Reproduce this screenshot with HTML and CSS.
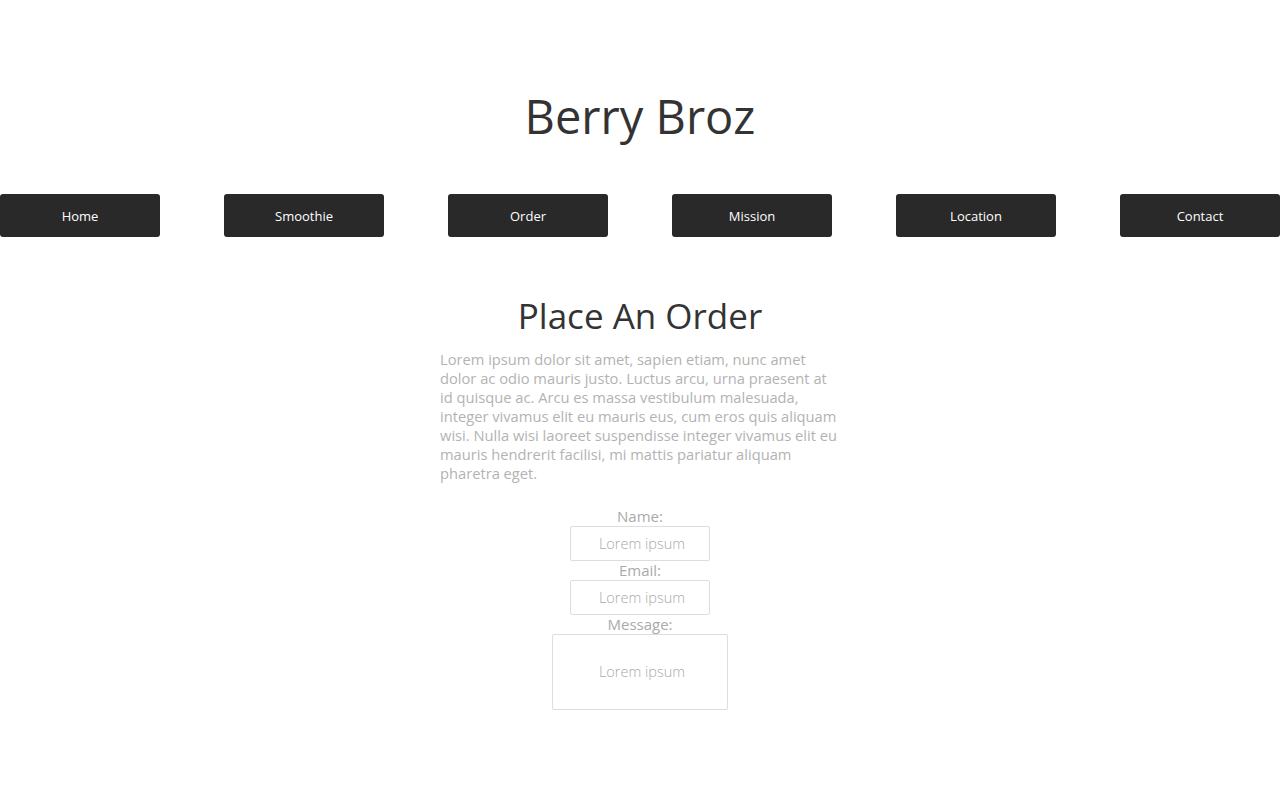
FILE: index.html
```html
<!DOCTYPE html>
<html lang="en">
<head>
<meta charset="utf-8">
<title>Berry Broz</title>
<link rel="stylesheet" href="styles.css">
</head>
<body>
<header class="site-header">
  <h1 class="brand">Berry Broz</h1>
</header>
<nav class="main-nav">
  <a class="nav-btn" href="#">Home</a>
  <a class="nav-btn" href="#">Smoothie</a>
  <a class="nav-btn" href="#">Order</a>
  <a class="nav-btn" href="#">Mission</a>
  <a class="nav-btn" href="#">Location</a>
  <a class="nav-btn" href="#">Contact</a>
</nav>
<main class="content">
  <h2 class="page-title">Place An Order</h2>
  <p class="intro">Lorem ipsum dolor sit amet, sapien etiam, nunc amet dolor ac odio mauris justo. Luctus arcu, urna praesent at id quisque ac. Arcu es massa vestibulum malesuada, integer vivamus elit eu mauris eus, cum eros quis aliquam wisi. Nulla wisi laoreet suspendisse integer vivamus elit eu mauris hendrerit facilisi, mi mattis pariatur aliquam pharetra eget.</p>
  <form class="order-form">
    <label class="field-label" for="name">Name:</label>
    <input class="field" id="name" type="text" placeholder="Lorem ipsum">
    <label class="field-label" for="email">Email:</label>
    <input class="field" id="email" type="text" placeholder="Lorem ipsum">
    <label class="field-label" for="msg">Message:</label>
    <textarea class="field field-area" id="msg" placeholder="Lorem ipsum"></textarea>
  </form>
</main>
</body>
</html>
```

FILE: styles.css
```css
* { box-sizing: border-box; }
body {
  margin: 0;
  background: #fff;
  font-family: "Open Sans", "Liberation Sans", sans-serif;
  color: #333;
}
.site-header {
  padding-top: 84px;
  height: 194px;
  text-align: center;
}
.brand {
  margin: 0;
  font-size: 47px;
  font-weight: 400;
  line-height: 64px;
  color: #333;
}
.main-nav {
  display: flex;
  justify-content: space-between;
}
.nav-btn {
  width: 160px;
  height: 43px;
  display: flex;
  align-items: center;
  justify-content: center;
  background: #292929;
  color: #fff;
  border-radius: 3px;
  font-size: 13px;
  text-decoration: none;
}
.content {
  width: 400px;
  margin: 0 auto;
  padding-top: 57px;
}
.page-title {
  margin: 0;
  text-align: center;
  font-size: 35px;
  font-weight: 400;
  line-height: 44px;
  color: #333;
}
.intro {
  margin: 12px 0 0;
  font-size: 14.7px;
  line-height: 19px;
  color: #b3b3b3;
}
.order-form {
  margin-top: 24px;
  display: flex;
  flex-direction: column;
  align-items: center;
}
.field-label {
  font-size: 15px;
  line-height: 19px;
  color: #aaa;
}
.field {
  width: 140px;
  height: 35px;
  border: 1px solid #ddd;
  border-radius: 2px;
  font-family: "Open Sans", sans-serif;
  font-size: 14.5px;
  font-weight: 300;
  text-align: center;
  padding: 0 0 0 4px;
  outline: none;
  resize: none;
}
.field::placeholder { color: #aaa; font-weight: 300; }
.field-area {
  width: 176px;
  height: 76px;
  padding-top: 27px;
}
```
